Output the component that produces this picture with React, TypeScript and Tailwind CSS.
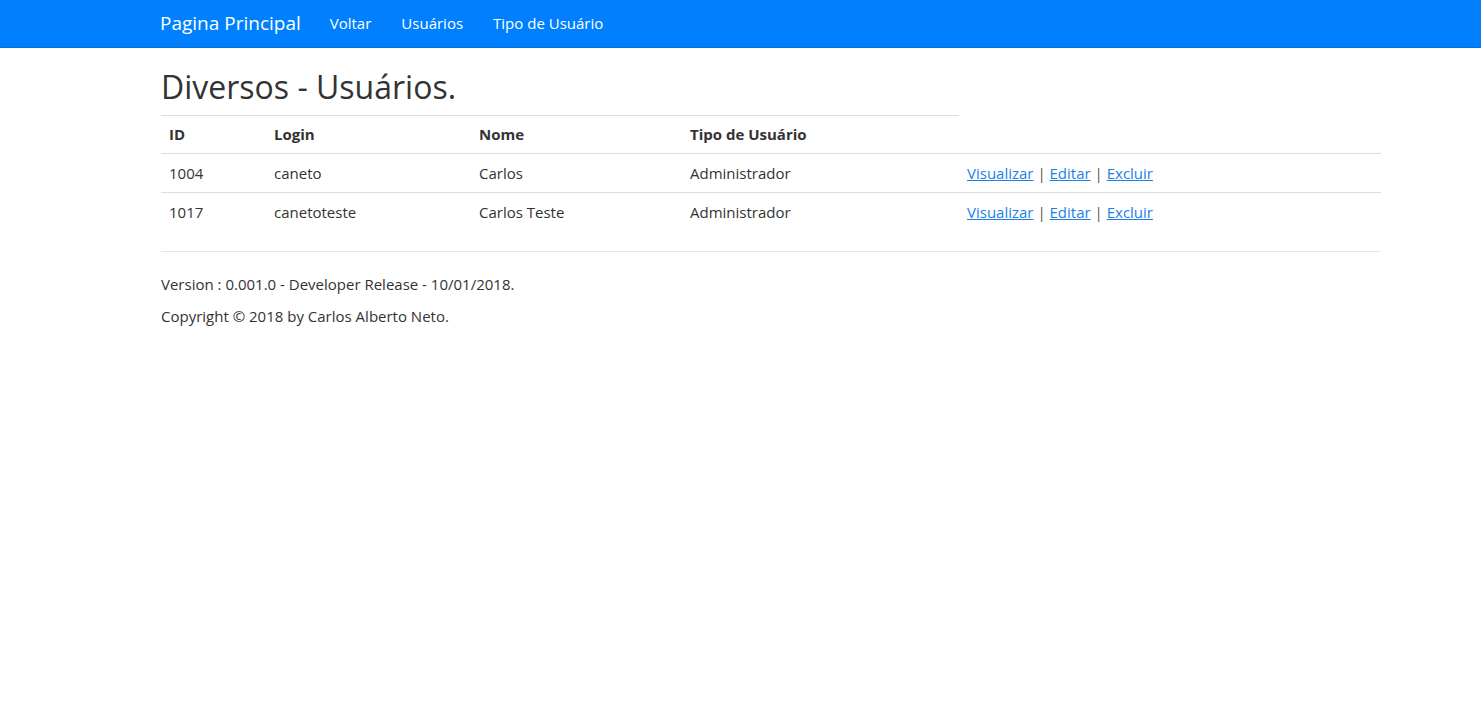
import React from "react";

const users = [
  { id: 1004, login: "caneto", nome: "Carlos", tipo: "Administrador" },
  { id: 1017, login: "canetoteste", nome: "Carlos Teste", tipo: "Administrador" },
];

const Header = () => {
  return (
    <header className="bg-[#007fff] border-b border-[#0a6fd6] h-[48px]">
      <div className="pl-[160px] flex items-center h-full">
        <a href="#" className="text-white text-[19px] mr-[29px]">
          Pagina Principal
        </a>
        <nav className="flex items-center gap-[30px] text-[15px] text-white">
          <a href="#">Voltar</a>
          <a href="#">Usuários</a>
          <a href="#">Tipo de Usuário</a>
        </nav>
      </div>
    </header>
  );
};

const App = () => {
  return (
    <div className="min-h-[703px] bg-white text-[#333] font-['Open_Sans',sans-serif] text-[15px]">
      <Header />
      <main className="pl-[161px] w-[1381px]">
        <h1 className="text-[32px] leading-[36px] mt-[21px] mb-[10px]">Diversos - Usuários.</h1>
        <table className="w-[1220px] border-collapse">
          <thead>
            <tr className="border-b border-[#ddd]">
              <th className="w-[105px] text-left px-[8px] py-[8px] leading-[21px] font-bold border-t border-[#ddd]">ID</th>
              <th className="w-[205px] text-left px-[8px] py-[8px] leading-[21px] font-bold border-t border-[#ddd]">Login</th>
              <th className="w-[211px] text-left px-[8px] py-[8px] leading-[21px] font-bold border-t border-[#ddd]">Nome</th>
              <th className="w-[277px] text-left px-[8px] py-[8px] leading-[21px] font-bold border-t border-[#ddd]">Tipo de Usuário</th>
              <th className="px-[8px] py-[8px]"></th>
            </tr>
          </thead>
          <tbody>
            {users.map((u, i) => (
              <tr key={u.id} className={i === 0 ? "border-b border-[#ddd]" : ""}>
                <td className="px-[8px] py-[8px] leading-[22px]">{u.id}</td>
                <td className="px-[8px] py-[8px] leading-[22px]">{u.login}</td>
                <td className="px-[8px] py-[8px] leading-[22px]">{u.nome}</td>
                <td className="px-[8px] py-[8px] leading-[22px]">{u.tipo}</td>
                <td className="px-[8px] py-[8px] leading-[22px] text-[#555]">
                  <a href="#" className="text-[#1a7fe8] underline">Visualizar</a> |{" "}
                  <a href="#" className="text-[#1a7fe8] underline">Editar</a> |{" "}
                  <a href="#" className="text-[#1a7fe8] underline">Excluir</a>
                </td>
              </tr>
            ))}
          </tbody>
        </table>
        <hr className="w-[1220px] border-t border-[#e5e5e5] mt-[20px] mb-[21px]" />
        <footer>
          <p className="leading-[22px] mb-[10px]">Version : 0.001.0 - Developer Release - 10/01/2018.</p>
          <p className="leading-[22px]">Copyright © 2018 by Carlos Alberto Neto.</p>
        </footer>
      </main>
    </div>
  );
};

export default App;
